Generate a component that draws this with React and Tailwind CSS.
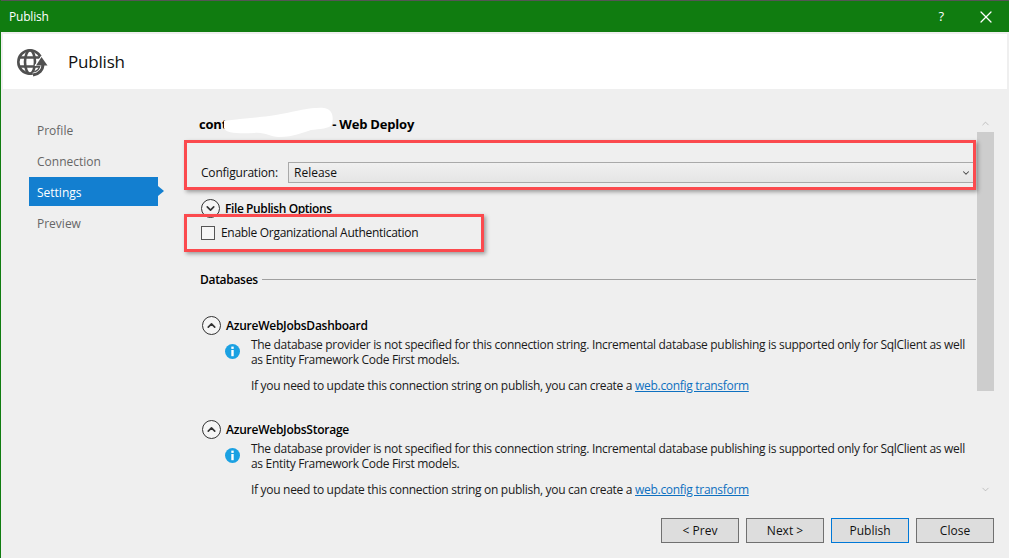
import { ChevronDown, ChevronUp, X } from 'lucide-react';

function CircleToggle({ open }) {
  return (
    <span className="flex h-[19px] w-[19px] shrink-0 items-center justify-center rounded-full border-[1.5px] border-[#333] bg-[#f5f5f5]">
      {open ? <ChevronUp size={13} strokeWidth={3} color="#333" /> : <ChevronDown size={13} strokeWidth={3} color="#333" />}
    </span>
  );
}

function InfoIcon() {
  return (
    <svg width="15" height="15" viewBox="0 0 15 15" className="shrink-0">
      <circle cx="7.5" cy="7.5" r="7.5" fill="#1ba1e2" />
      <rect x="6.3" y="2.6" width="2.4" height="2.3" fill="#fff" />
      <rect x="6.3" y="6" width="2.4" height="6.2" fill="#fff" />
    </svg>
  );
}

function GlobeIcon() {
  return (
    <svg width="34" height="30" viewBox="0 0 34 30">
      <g fill="none" stroke="#505050" strokeWidth="2.6">
        <circle cx="14" cy="15" r="11.7" />
        <ellipse cx="14" cy="15" rx="5" ry="11.7" />
        <path d="M3 10.5h22M3 19.5h22" />
      </g>
      <path d="M27 17 C27 23 23 27 17 28" fill="none" stroke="#fff" strokeWidth="4.5" />
      <path d="M19 18.5 L25.5 9 L32.5 18.5Z" fill="#fff" stroke="#fff" strokeWidth="1" />
      <path d="M27 17 C27 23 23 27 17 28" fill="none" stroke="#505050" strokeWidth="3" />
      <path d="M20 18.5 L25.5 10 L31.5 18.5Z" fill="#505050" />
    </svg>
  );
}

function DbSection({ name, className }) {
  return (
    <div className={className}>
      <div className="ml-[3px] flex h-[19px] items-center gap-[5px]">
        <CircleToggle open />
        <span className="font-semibold tracking-[-0.25px] text-black">{name}</span>
      </div>
      <div className="flex">
        <div className="ml-[26px] w-[26px] pt-[9px]"><InfoIcon /></div>
        <div className="whitespace-nowrap text-[#1a1a1a]">
          <p className="mt-[2px] leading-[15px] tracking-[-0.31px]">The database provider is not specified for this connection string. Incremental database publishing is supported only for SqlClient as well<br />as Entity Framework Code First models.</p>
          <p className="mt-[11px] leading-[15px] tracking-[-0.3px]">If you need to update this connection string on publish, you can create a <a className="text-[#0e70c0] underline">web.config transform</a></p>
        </div>
      </div>
    </div>
  );
}

function SideItem({ label, active }) {
  if (active) {
    return (
      <div className="relative flex h-[29px] items-center bg-[#137fd0] pl-2 pt-[2px] text-white">
        {label}
        <span className="absolute left-full top-[9px] h-0 w-0 border-y-[5px] border-l-[6px] border-y-transparent border-l-[#137fd0]" />
      </div>
    );
  }
  return <div className="flex h-[31px] items-center pl-2 text-[#666]">{label}</div>;
}

function FooterButton({ label, primary }) {
  return (
    <button className={`h-[25px] w-[78px] border bg-[#dddddd] text-[#111] ${primary ? 'border-[#0078d7]' : 'border-[#707070]'}`}>{label}</button>
  );
}

export default function App() {
  return (
    <div className="relative flex h-[558px] w-[1009px] flex-col overflow-hidden border-l border-[#107c10] bg-[#efefef] text-[12px] font-['Open_Sans','Noto_Sans',sans-serif]">
      <div className="flex h-[32px] shrink-0 items-center justify-between border-t border-[#555] bg-[#107c10] pl-[8px] pr-[13px] text-white">
        <span className="tracking-[-0.2px]">Publish</span>
        <div className="flex items-center gap-[32px]">
          <span className="text-[13px]">?</span>
          <X size={20} strokeWidth={1.5} color="#fff" />
        </div>
      </div>
      <div className="ml-[2px] mr-[2px] mt-[2px] flex h-[55px] shrink-0 items-center bg-white pl-[13px]">
        <GlobeIcon />
        <span className="ml-[18px] text-[17px] tracking-[-0.2px] text-[#111]">Publish</span>
      </div>
      <div className="flex flex-1">
        <div className="ml-[28px] mt-[26px] w-[129px] shrink-0">
          <SideItem label="Profile" />
          <SideItem label="Connection" />
          <SideItem label="Settings" active />
          <div className="h-[2px]" />
          <SideItem label="Preview" />
        </div>
        <div className="ml-[41px] flex-1">
          <div className="flex">
            <div className="w-[777px]">
              <div className="mt-[26px] h-[20px] text-[13px] font-bold tracking-[-0.2px] text-black">
                cont<span className="ml-[105px]">- Web Deploy</span>
              </div>
              <div className="ml-[2px] mt-[27px] flex h-[21px] items-center">
                <span className="w-[87px] tracking-[-0.2px] text-[#111]">Configuration:</span>
                <div className="flex h-[21px] flex-1 items-center justify-between border border-[#a9a9a9] bg-linear-to-b from-[#f0f0f0] to-[#e5e5e5] pl-[5px] pr-[4px] text-[#111]">
                  Release
                  <ChevronDown size={10} strokeWidth={2.5} color="#444" />
                </div>
              </div>
              <div className="ml-[2px] mt-[16px] flex h-[19px] items-center gap-[5px]">
                <CircleToggle />
                <span className="font-semibold tracking-[-0.4px] text-black">File Publish Options</span>
              </div>
              <div className="ml-[2px] mt-[7px] flex h-[15px] items-center">
                <span className="h-[14px] w-[14px] border border-[#555] bg-[#f6f6f6]" />
                <span className="ml-[6px] tracking-[-0.3px] text-[#111]">Enable Organizational Authentication</span>
              </div>
              <div className="ml-[1px] mt-[31px] flex h-[17px] items-center">
                <span className="font-semibold tracking-[-0.3px] text-black">Databases</span>
                <span className="ml-[4px] h-px flex-1 bg-[#a0a0a0]" />
              </div>
              <DbSection name="AzureWebJobsDashboard" className="mt-[28px]" />
              <DbSection name="AzureWebJobsStorage" className="mt-[27px]" />
            </div>
            <div className="ml-[1px] flex w-[17px] flex-col items-center">
              <ChevronUp size={11} strokeWidth={1.5} color="#aaa" className="mb-[3px] mt-[29px]" />
              <div className="h-[259px] w-full bg-[#cdcdcd]" />
              <ChevronDown size={11} strokeWidth={1.5} color="#aaa" className="mt-[93px]" />
            </div>
          </div>
          <div className="ml-[462px] mt-[21px] flex gap-[7px]">
            <FooterButton label="< Prev" />
            <FooterButton label="Next >" />
            <FooterButton label="Publish" primary />
            <FooterButton label="Close" />
          </div>
        </div>
      </div>

      {/* annotations drawn over the screenshot */}
      <div className="absolute left-[183px] top-[140px] h-[50px] w-[792px] border-[3px] border-[#fb4a4e] shadow-[2px_2px_4px_rgba(0,0,0,0.35)]" />
      <div className="absolute left-[183px] top-[214px] h-[38px] w-[300px] border-[3px] border-[#fb4a4e] shadow-[2px_2px_4px_rgba(0,0,0,0.35)]" />
      <svg className="absolute left-[218px] top-[104px]" width="120" height="36" viewBox="0 0 120 36">
        <path d="M5 17 C25 14 50 13 62 10 C80 7 92 3 105 4 C113 5 115 12 113 20 C111 25 100 25 92 26 C85 28 75 33 60 33 C50 33 47 28 35 29 C20 30 6 29 5 24 Z" fill="#fff" />
      </svg>
    </div>
  );
}
